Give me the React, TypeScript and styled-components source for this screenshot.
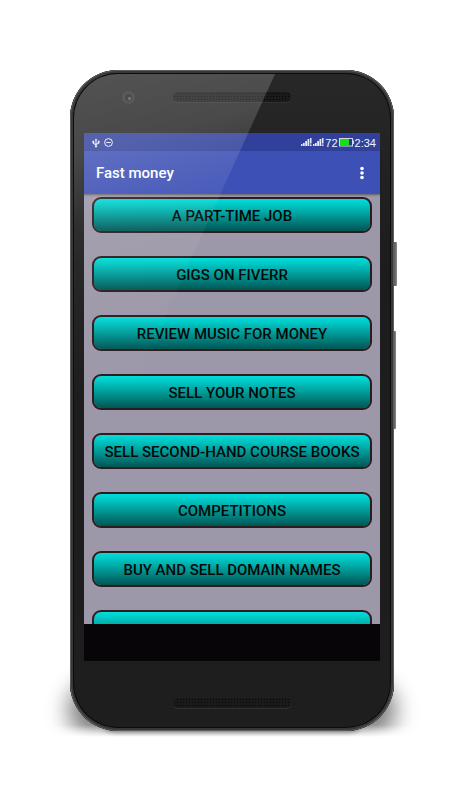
import React from "react";
import styled, { createGlobalStyle } from "styled-components";

const GlobalStyle = createGlobalStyle`
  * { box-sizing: border-box; }
  body { margin: 0; background: #fff; font-family: Roboto, "Liberation Sans", sans-serif; }
  button { font: inherit; border: 0; margin: 0; cursor: pointer; }
`;

const Page = styled.main`
  padding: 70px 72px 69px 70px;
`;

const Device = styled.div`
  position: relative;
  max-width: 480px;
  margin: 0 auto;
`;

const GroundShadow = styled.div`
  position: absolute;
  left: -36px;
  right: -36px;
  bottom: -8px;
  height: 80px;
  overflow: hidden;
  mask-image: linear-gradient(180deg, #000 66px, transparent 78px);

  &::before {
    content: "";
    position: absolute;
    inset: 22px 34px 0;
    border-radius: 30px;
    background: rgba(0, 0, 0, 0.5);
    filter: blur(11px);
  }

  &::after {
    content: "";
    position: absolute;
    inset: 50px 70px 3px;
    border-radius: 20px;
    background: rgba(0, 0, 0, 0.85);
    filter: blur(3px);
  }
`;

const SideKey = styled.div<{ $top: string; $height: string; $width: number }>`
  position: absolute;
  left: calc(100% - 1px);
  top: ${(p) => p.$top};
  height: ${(p) => p.$height};
  width: ${(p) => p.$width}px;
  border-radius: 0 1px 1px 0;
  background: linear-gradient(90deg, #4a4748, #8a8788);
`;

const Body = styled.div`
  position: relative;
  display: flex;
  flex-direction: column;
  aspect-ratio: 324 / 661;
  padding: 0 14px;
  overflow: hidden;
  border-radius: 48px;
  background: linear-gradient(180deg, #282828 0%, #1c1c1c 30%, #1e1e1e 100%);
  box-shadow: inset 0 0 0 1px #5c5c5c, inset 0 0 0 3px #383838, inset 0 0 0 4px #0b0b0b;
`;

const Glare = styled.div`
  position: absolute;
  inset: 4px;
  border-radius: 44px;
  pointer-events: none;
  clip-path: polygon(0 0, 201px 0, 0 442px);
  background: linear-gradient(165deg, rgba(255, 255, 255, 0.2) 0, rgba(255, 255, 255, 0.17) 80px, rgba(255, 255, 255, 0.07) 150px, rgba(255, 255, 255, 0.03) 230px, transparent 320px);
`;

const Bezel = styled.div`
  flex: none;
  display: grid;
  grid-template-columns: 1fr 118px 1fr;
`;

const TopBezel = styled(Bezel)`
  align-items: center;
  height: 63px;
  padding-bottom: 9px;
`;

const BottomBezel = styled(Bezel)`
  align-items: start;
  height: 70px;
  padding-top: 37px;
`;

const Camera = styled.div`
  justify-self: center;
  width: 13px;
  height: 13px;
  border: 3px solid #343434;
  border-radius: 50%;
  background: radial-gradient(circle at 65% 65%, #705048 0 1px, #202228 2px);
`;

const Speaker = styled.div`
  grid-column: 2;
  height: 10px;
  border-radius: 5px;
  background-color: #1a1a1a;
  background-image: radial-gradient(circle, #050505 0 1px, transparent 1px);
  background-size: 3px 3px;
  box-shadow: 0 1px 0 #303030;
`;

const Screen = styled.section`
  flex: 1;
  min-height: 0;
  display: flex;
  flex-direction: column;
  background: #9d98a9;
`;

const StatusBar = styled.div`
  flex: none;
  display: flex;
  align-items: center;
  justify-content: space-between;
  height: 18px;
  padding: 1px 4px 0 8px;
  background: #31419b;
  color: #f4f5fb;
  font-family: "Liberation Sans", Roboto, sans-serif;
  font-size: 11px;
  line-height: 18px;
`;

const StatusGroup = styled.div<{ $gap: number }>`
  display: flex;
  align-items: center;
  gap: ${(p) => p.$gap}px;
`;

const AppBar = styled.header`
  position: relative;
  flex: none;
  display: flex;
  align-items: center;
  justify-content: space-between;
  height: 43px;
  padding: 0 8px 0 12px;
  background: #3d50b5;
  box-shadow: 0 1px 2px rgba(0, 0, 0, 0.4);
`;

const Title = styled.h1`
  margin: 0;
  color: #fff;
  font-size: 15px;
  line-height: 20px;
  font-weight: 500;
`;

const MenuButton = styled.button`
  display: grid;
  place-items: center;
  width: 20px;
  height: 28px;
  padding: 0;
  background: transparent;
`;

const List = styled.div`
  flex: 1;
  min-height: 0;
  display: flex;
  flex-direction: column;
  gap: 23px;
  padding: 3px 8px 0;
  overflow: hidden;
`;

const Choice = styled.button`
  flex: none;
  height: 36px;
  padding: 2px 0 0;
  border: 2px solid #2b1c1f;
  border-radius: 9px;
  background: linear-gradient(180deg, #00dedb 0%, #00c8c5 18%, #005654 100%) padding-box;
  color: #040808;
  font-size: 15px;
  font-weight: 500;
  line-height: 20px;
  white-space: nowrap;
`;

const NavBar = styled.div`
  flex: none;
  height: 37px;
  background: #070508;
`;

const choices = [
  "A PART-TIME JOB",
  "GIGS ON FIVERR",
  "REVIEW MUSIC FOR MONEY",
  "SELL YOUR NOTES",
  "SELL SECOND-HAND COURSE BOOKS",
  "COMPETITIONS",
  "BUY AND SELL DOMAIN NAMES",
];

const Signal = () => (
  <svg width="11" height="9" viewBox="0 0 11 9" fill="#e6e8f5" aria-hidden="true">
    <path d="M0 6h1.5v2H0zM2 5h1.7v3H2zM4.2 3h1.8v5H4.2zM6.5 1h1.8v7H6.5zM9 0h1.5v5.6H9zM9 6.6h1.5V8H9z" />
  </svg>
);

const Usb = () => (
  <svg width="8" height="10" viewBox="0 0 9 10" fill="none" stroke="#eceefa" strokeWidth="1.2" aria-hidden="true">
    <path d="M4.5 1.5v7M1.5 4v1.6L4.5 7M7.5 3.5v1.7l-3 1.5" />
    <path d="M4.5 0L3 2h3zM3.3 8.2h2.4v1.6H3.3zM.5 2.6h2v2h-2zM6.5 2.6h2v2h-2z" fill="#eceefa" stroke="none" />
  </svg>
);

const Quiet = () => (
  <svg width="9" height="9" viewBox="0 0 9 9" fill="none" stroke="#eceefa" aria-hidden="true">
    <circle cx="4.5" cy="4.5" r="3.9" />
    <path d="M2.2 4.5h4.6" />
  </svg>
);

const Battery = () => (
  <svg width="15" height="9" viewBox="0 0 15 9" aria-hidden="true">
    <rect x=".5" y=".5" width="13" height="7.5" fill="#26358e" stroke="#d5d8ea" />
    <path d="M1 1h9v6.5H1z" fill="#16e012" />
    <path d="M14 2.5h1v3.5h-1z" fill="#d5d8ea" />
  </svg>
);

export default function App() {
  return (
    <>
      <GlobalStyle />
      <Page>
        <Device>
          <GroundShadow />
          <SideKey $top="26%" $height="44px" $width={4} />
          <SideKey $top="39.5%" $height="98px" $width={3} />
          <Body>
            <TopBezel>
              <Camera />
              <Speaker />
            </TopBezel>
            <Screen>
              <StatusBar>
                <StatusGroup $gap={4}>
                  <Usb />
                  <Quiet />
                </StatusGroup>
                <StatusGroup $gap={1}>
                  <Signal />
                  <Signal />
                  <span>72</span>
                  <Battery />
                  <span>2:34</span>
                </StatusGroup>
              </StatusBar>
              <AppBar>
                <Title>Fast money</Title>
                <MenuButton type="button" aria-label="More options">
                  <svg width="4" height="14" viewBox="0 0 4 14" fill="#fff" aria-hidden="true">
                    <circle cx="2" cy="2.5" r="1.8" />
                    <circle cx="2" cy="7" r="1.8" />
                    <circle cx="2" cy="11.5" r="1.8" />
                  </svg>
                </MenuButton>
              </AppBar>
              <List>
                {choices.map((label) => (
                  <Choice key={label} type="button">{label}</Choice>
                ))}
                <Choice type="button" aria-label="More ideas" />
              </List>
              <NavBar />
            </Screen>
            <BottomBezel>
              <Speaker />
            </BottomBezel>
            <Glare />
          </Body>
        </Device>
      </Page>
    </>
  );
}
